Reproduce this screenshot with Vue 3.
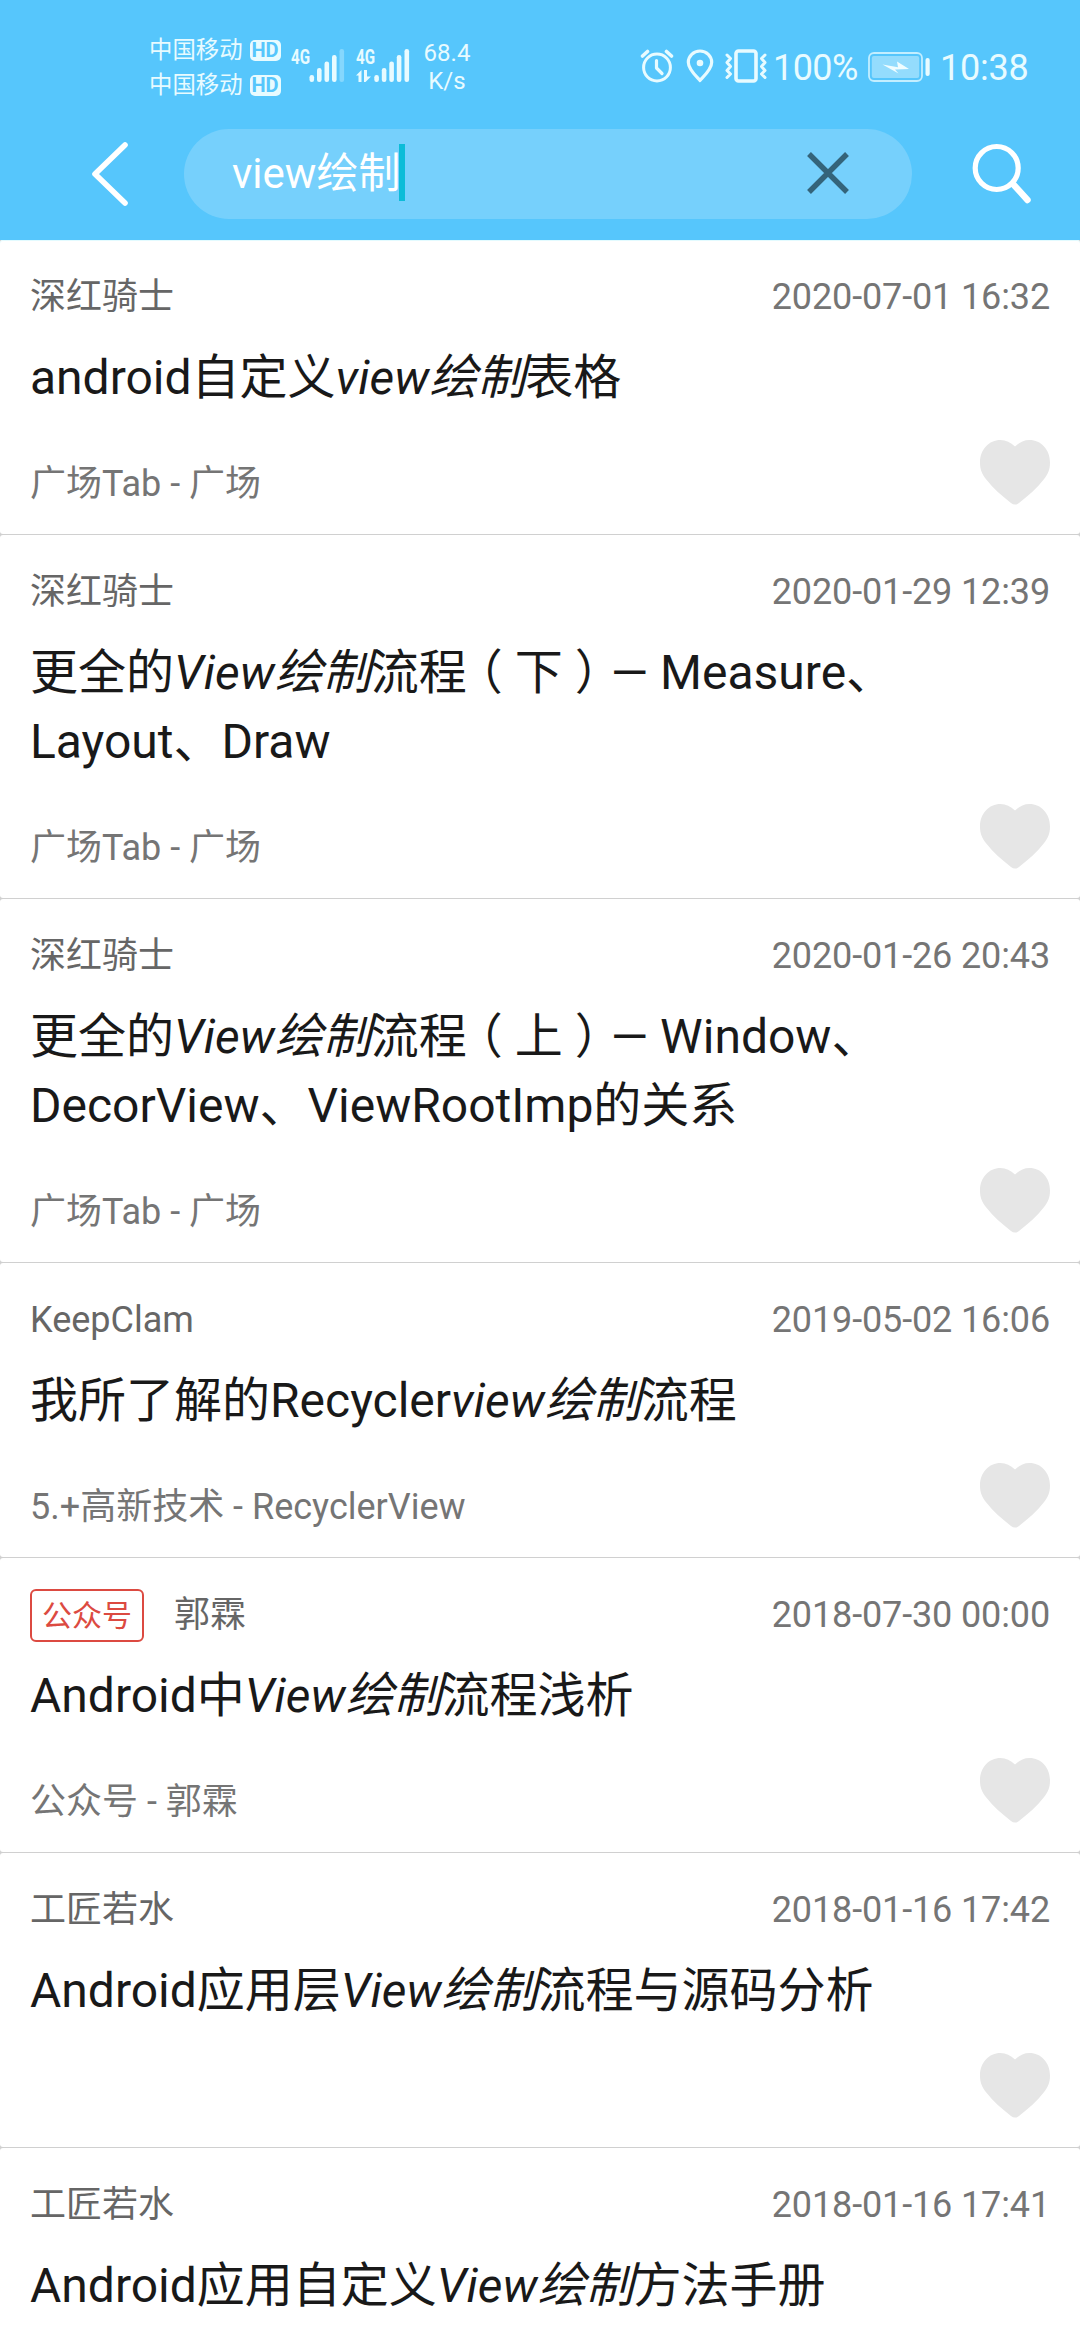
<script setup>
const items = [
  { author: '深红骑士', date: '2020-07-01 16:32', pre: 'android自定义', hit: 'view绘制', post: '表格', source: '广场Tab - 广场' },
  { author: '深红骑士', date: '2020-01-29 12:39', pre: '更全的', hit: 'View绘制', post: '流程', part: '下', rest: '— Measure、Layout、Draw', source: '广场Tab - 广场' },
  { author: '深红骑士', date: '2020-01-26 20:43', pre: '更全的', hit: 'View绘制', post: '流程', part: '上', rest: '— Window、DecorView、ViewRootImp的关系', source: '广场Tab - 广场' },
  { author: 'KeepClam', date: '2019-05-02 16:06', pre: '我所了解的Recycler', hit: 'view绘制', post: '流程', source: '5.+高新技术 - RecyclerView' },
  { author: '郭霖', tag: '公众号', date: '2018-07-30 00:00', pre: 'Android中', hit: 'View绘制', post: '流程浅析', source: '公众号 - 郭霖' },
  { author: '工匠若水', date: '2018-01-16 17:42', pre: 'Android应用层', hit: 'View绘制', post: '流程与源码分析', source: '' },
  { author: '工匠若水', date: '2018-01-16 17:41', pre: 'Android应用自定义', hit: 'View绘制', post: '方法手册', source: '' },
]
</script>

<template>
  <div class="screen">
    <header class="header">
      <div class="status">
        <div class="carriers">
          <div v-for="n in 2" :key="n" class="carrier">
            <span>中国移动</span><span class="hd">HD</span>
          </div>
        </div>
        <svg class="signals" width="122" height="40" viewBox="0 0 122 40" fill="#e8fbff">
          <text x="0" y="18" class="net" textLength="19" lengthAdjust="spacingAndGlyphs">4G</text>
          <rect x="18.500" y="29" width="4.600" height="7" rx="2.200" />
          <rect x="26" y="22" width="4.600" height="14" rx="2.200" />
          <rect x="33.500" y="15.500" width="4.600" height="20.500" rx="2.200" />
          <rect x="41" y="9" width="4.600" height="27" rx="2.200" />
          <rect x="48.500" y="3" width="4.600" height="33" rx="2.200" opacity=".32" />
          <text x="65" y="18" class="net" textLength="19" lengthAdjust="spacingAndGlyphs">4G</text>
          <path d="M65 29.500 70.500 24V36H67.500V29.500ZM73 24h3v6.500H80L74.500 36H73Z" />
          <rect x="83.300" y="29" width="4.600" height="7" rx="2.200" />
          <rect x="90.800" y="22" width="4.600" height="14" rx="2.200" />
          <rect x="98.300" y="15.500" width="4.600" height="20.500" rx="2.200" />
          <rect x="105.800" y="9" width="4.600" height="27" rx="2.200" />
          <rect x="113.500" y="3" width="4.600" height="33" rx="2.200" />
        </svg>
        <div class="speed"><span>68.4</span><span>K/s</span></div>
        <div class="spacer"></div>
        <svg class="alarm" width="34" height="34" viewBox="0 0 34 34" fill="none" stroke="#e8fbff" stroke-width="3" stroke-linecap="round" stroke-linejoin="round">
          <circle cx="17" cy="18.500" r="13.400" />
          <path d="M16.500 11.500v7.500l5.500 5.500" stroke-width="3.200" />
          <path d="M2.500 7 7.500 2.500M26.500 2.500l5 4.500" stroke-width="3.600" />
        </svg>
        <svg class="pin" width="28" height="34" viewBox="0 0 28 34">
          <path d="M14 31.500C9.500 26.500 2.300 20 2.300 13.200a11.700 11.200 0 0 1 23.400 0C25.700 20 18.500 26.500 14 31.500Z" fill="none" stroke="#e8fbff" stroke-width="3.200" stroke-linejoin="round" />
          <circle cx="14" cy="14" r="3.300" fill="#e8fbff" />
        </svg>
        <svg class="vibrate" width="44" height="34" viewBox="0 0 44 34" fill="none" stroke="#e8fbff" stroke-width="3" stroke-linecap="round" stroke-linejoin="round">
          <rect x="12" y="2" width="20" height="30" rx="2.500" stroke-width="3.600" />
          <path d="M3 6 6.500 9.500 3 13.500 6.500 17.500 3 21.500 6.500 25 3 28.500M41 6 37.500 9.500 41 13.500 37.500 17.500 41 21.500 37.500 25 41 28.500" />
        </svg>
        <span class="pct">100%</span>
        <svg class="battery" width="62" height="30" viewBox="0 0 62 30">
          <rect x="1" y="1" width="53" height="28" rx="5" fill="none" stroke="#c3eeff" stroke-width="1.800" />
          <rect x="3.800" y="4" width="47.400" height="22" rx="2" fill="#94dcfd" />
          <path d="M14.500 12.500 30 15.200 29 9.500 41 17 27 17.500 30.500 21.500Z" fill="#f0fdff" />
          <rect x="57.500" y="6" width="4.200" height="18" rx="2" fill="#e8fbff" />
        </svg>
        <span class="clock">10:38</span>
      </div>
      <div class="bar">
        <svg class="back" width="40" height="68" viewBox="0 0 40 68" fill="none" stroke="#fff" stroke-width="5.600" stroke-linecap="round" stroke-linejoin="round">
          <path d="M35 5 5 34 35 63" />
        </svg>
        <div class="field">
          <span class="query">view绘制</span><i class="caret"></i>
          <svg class="clear" width="42" height="42" viewBox="0 0 42 42" stroke="#34647a" stroke-width="5.400">
            <path d="M2 2 40 40M40 2 2 40" />
          </svg>
        </div>
        <svg class="search" width="60" height="62" viewBox="0 0 60 62" fill="none" stroke="#fff" stroke-linecap="round">
          <circle cx="24.700" cy="25" r="21.500" stroke-width="5.200" />
          <path d="M41 41 55.500 57" stroke-width="6.400" />
        </svg>
      </div>
    </header>
    <main class="list">
      <article v-for="(it, i) in items" :key="i" class="item">
        <div class="meta">
          <span v-if="it.tag" class="tag">{{ it.tag }}</span>
          <span class="author">{{ it.author }}</span>
          <time class="date">{{ it.date }}</time>
        </div>
        <h2 class="title">{{ it.pre }}<em>{{ it.hit }}</em>{{ it.post }}<template v-if="it.part"><span class="open">（</span>{{ it.part }}<span class="close">）</span>{{ it.rest }}</template></h2>
        <div class="foot">
          <span class="source">{{ it.source }}</span>
          <svg class="heart" width="70" height="65" viewBox="0 0 70 65">
            <path d="M35 6.500C30.500 2.200 26 0 20.500 0 9 0 0 9.500 0 22.500 0 30 2 34 6.500 39.800 13 48.500 22 56 31 63Q35 66 39 63C48 56 57 48.500 63.500 39.800 68 34 70 30 70 22.500 70 9.500 61 0 49.500 0 44 0 39.500 2.200 35 6.500Z" fill="#e6e6e6" />
          </svg>
        </div>
      </article>
    </main>
  </div>
</template>

<style>
body { margin: 0; background: #fff; }
</style>

<style scoped>
.screen {
  width: 1080px;
  height: 2340px;
  overflow: hidden;
  background: #fff;
  font-family: Roboto, "Noto Sans CJK SC", sans-serif;
}
.header { height: 240px; background: #56c6fc; }
.status {
  display: flex;
  height: 129px;
  padding: 0 50px 0 149px;
  box-sizing: border-box;
  align-items: flex-start;
  color: #e8fbff;
}
.carriers { width: 133px; padding-top: 33px; }
.carrier { display: flex; align-items: center; height: 35px; font-size: 23.400px; line-height: 35px; white-space: nowrap; }
.hd {
  width: 31px;
  height: 21px;
  margin-left: 7px;
  border-radius: 5px;
  background: #e8fbff;
  color: #56c6fc;
  font-size: 20px;
  font-weight: 700;
  line-height: 21px;
  text-align: center;
}
.signals { margin: 46px 0 0 9px; }
.net { font-family: Roboto, sans-serif; font-size: 21px; font-weight: 700; }
.speed { display: flex; flex-direction: column; width: 54px; margin: 39px 0 0 7px; font-size: 24px; line-height: 28px; text-align: center; }
.spacer { flex: 1; }
.alarm { margin-top: 49px; }
.pin { margin: 49px 0 0 12px; }
.vibrate { margin: 49px 0 0 10px; }
.pct { width: 86px; margin: 46px 0 0 5px; font-size: 36px; letter-spacing: -.6px; line-height: 44px; }
.battery { margin: 52px 0 0 9px; }
.clock { width: 90px; margin: 46px 0 0 10px; font-size: 36px; letter-spacing: -.2px; line-height: 44px; }
.bar { display: flex; align-items: center; height: 90px; }
.back { margin-left: 90px; }
.field {
  display: flex;
  align-items: center;
  width: 728px;
  height: 90px;
  margin-left: 54px;
  padding: 0 63px 0 48px;
  box-sizing: border-box;
  border-radius: 45px;
  background: #76d0fc;
}
.query { width: 167px; color: #fff; font-size: 42px; line-height: 60px; white-space: nowrap; }
.caret { width: 6px; height: 57px; margin-top: -3px; background: #0cbcd8; }
.clear { margin: -2px 0 0 auto; }
.search { margin: 0 0 0 60px; }
.list { background: #d0d0d0; }
.item {
  margin-bottom: 1px;
  padding: 30px 30px 29px;
  border-radius: 3px;
  background: #fff;
}
.item:first-child { box-shadow: inset 0 1px #e3fbff; }
.meta { display: flex; align-items: center; height: 54px; font-size: 36px; line-height: 42px; }
.tag {
  height: 53px;
  margin-right: 30px;
  padding: 0 10px;
  box-sizing: border-box;
  border: 2px solid #dc4a41;
  border-radius: 6px;
  color: #dc4a41;
  font-size: 30px;
  line-height: 50px;
}
.author { color: #666; }
.date { margin-left: auto; color: #757575; letter-spacing: -.13px; }
.title { margin: 19px 0 0; color: #191919; font-size: 48px; font-weight: 400; line-height: 69px; }
.title em { font-style: italic; }
.open, .close { display: inline-block; }
.open { transform: translateX(-12px); }
.close { transform: translateX(12px); }
.foot { display: flex; align-items: flex-end; justify-content: space-between; height: 93px; }
.source { color: #757575; font-size: 36px; line-height: 42px; }
.heart { flex: none; }
</style>
